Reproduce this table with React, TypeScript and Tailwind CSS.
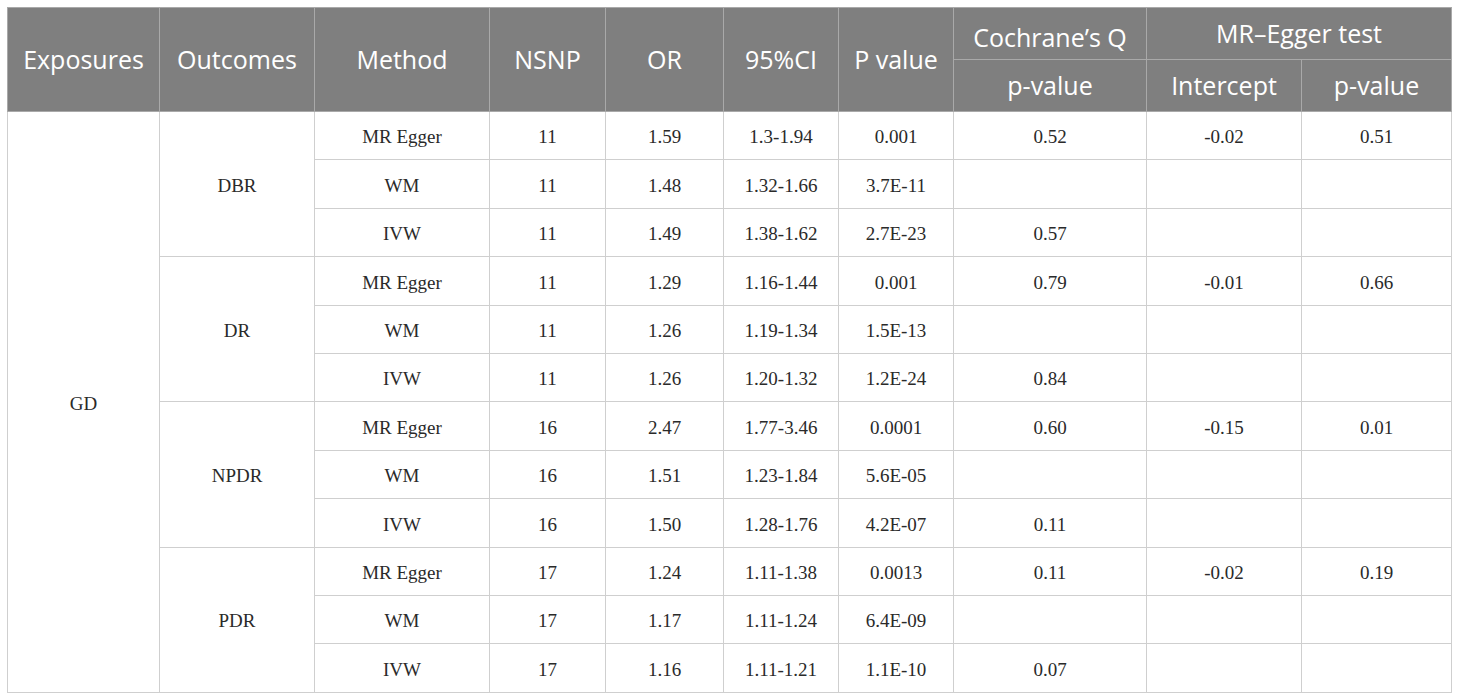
import React from "react";

type Row = { method: string; n: string; or: string; ci: string; p: string; q: string; icpt: string; pv: string };

const groups: { outcome: string; rows: Row[] }[] = [
  {
    outcome: "DBR",
    rows: [
      { method: "MR Egger", n: "11", or: "1.59", ci: "1.3-1.94", p: "0.001", q: "0.52", icpt: "-0.02", pv: "0.51" },
      { method: "WM", n: "11", or: "1.48", ci: "1.32-1.66", p: "3.7E-11", q: "", icpt: "", pv: "" },
      { method: "IVW", n: "11", or: "1.49", ci: "1.38-1.62", p: "2.7E-23", q: "0.57", icpt: "", pv: "" },
    ],
  },
  {
    outcome: "DR",
    rows: [
      { method: "MR Egger", n: "11", or: "1.29", ci: "1.16-1.44", p: "0.001", q: "0.79", icpt: "-0.01", pv: "0.66" },
      { method: "WM", n: "11", or: "1.26", ci: "1.19-1.34", p: "1.5E-13", q: "", icpt: "", pv: "" },
      { method: "IVW", n: "11", or: "1.26", ci: "1.20-1.32", p: "1.2E-24", q: "0.84", icpt: "", pv: "" },
    ],
  },
  {
    outcome: "NPDR",
    rows: [
      { method: "MR Egger", n: "16", or: "2.47", ci: "1.77-3.46", p: "0.0001", q: "0.60", icpt: "-0.15", pv: "0.01" },
      { method: "WM", n: "16", or: "1.51", ci: "1.23-1.84", p: "5.6E-05", q: "", icpt: "", pv: "" },
      { method: "IVW", n: "16", or: "1.50", ci: "1.28-1.76", p: "4.2E-07", q: "0.11", icpt: "", pv: "" },
    ],
  },
  {
    outcome: "PDR",
    rows: [
      { method: "MR Egger", n: "17", or: "1.24", ci: "1.11-1.38", p: "0.0013", q: "0.11", icpt: "-0.02", pv: "0.19" },
      { method: "WM", n: "17", or: "1.17", ci: "1.11-1.24", p: "6.4E-09", q: "", icpt: "", pv: "" },
      { method: "IVW", n: "17", or: "1.16", ci: "1.11-1.21", p: "1.1E-10", q: "0.07", icpt: "", pv: "" },
    ],
  },
];

const th = "border border-[#a9a9a9] font-normal text-center align-middle px-1";
const td = "border border-[#cfcfcf] text-center align-middle px-1 pt-1";

export default function App() {
  return (
    <div className="min-h-screen bg-white pl-[7px] pt-[7px]">
      <table className="table-fixed border-collapse w-[1445px] border border-[#b5b5b5]">
        <colgroup>
          <col className="w-[152px]" />
          <col className="w-[155px]" />
          <col className="w-[175px]" />
          <col className="w-[116px]" />
          <col className="w-[118px]" />
          <col className="w-[115px]" />
          <col className="w-[115px]" />
          <col className="w-[193px]" />
          <col className="w-[155px]" />
          <col className="w-[150px]" />
        </colgroup>
        <thead className="bg-[#7f7f7f] text-white text-[25px] leading-tight font-['Open_Sans',sans-serif]">
          <tr className="h-[52px]">
            <th rowSpan={2} className={th}>Exposures</th>
            <th rowSpan={2} className={th}>Outcomes</th>
            <th rowSpan={2} className={th}>Method</th>
            <th rowSpan={2} className={th}>NSNP</th>
            <th rowSpan={2} className={th}>OR</th>
            <th rowSpan={2} className={th}>95%CI</th>
            <th rowSpan={2} className={th}>P value</th>
            <th className={`${th} pt-2`}>Cochrane’s Q</th>
            <th colSpan={2} className={th}>MR–Egger test</th>
          </tr>
          <tr className="h-[52px]">
            <th className={th}>p-value</th>
            <th className={th}>Intercept</th>
            <th className={th}>p-value</th>
          </tr>
        </thead>
        <tbody className="text-[#2a2a2a] text-[19px] font-['Liberation_Serif',serif]">
          {groups.map((g, gi) =>
            g.rows.map((r, ri) => (
              <tr key={`${gi}-${ri}`} className="h-[48.4px]">
                {gi === 0 && ri === 0 && (
                  <td rowSpan={12} className={td}>GD</td>
                )}
                {ri === 0 && (
                  <td rowSpan={3} className={td}>{g.outcome}</td>
                )}
                <td className={td}>{r.method}</td>
                <td className={td}>{r.n}</td>
                <td className={td}>{r.or}</td>
                <td className={td}>{r.ci}</td>
                <td className={td}>{r.p}</td>
                <td className={td}>{r.q}</td>
                <td className={td}>{r.icpt}</td>
                <td className={td}>{r.pv}</td>
              </tr>
            ))
          )}
        </tbody>
      </table>
    </div>
  );
}
